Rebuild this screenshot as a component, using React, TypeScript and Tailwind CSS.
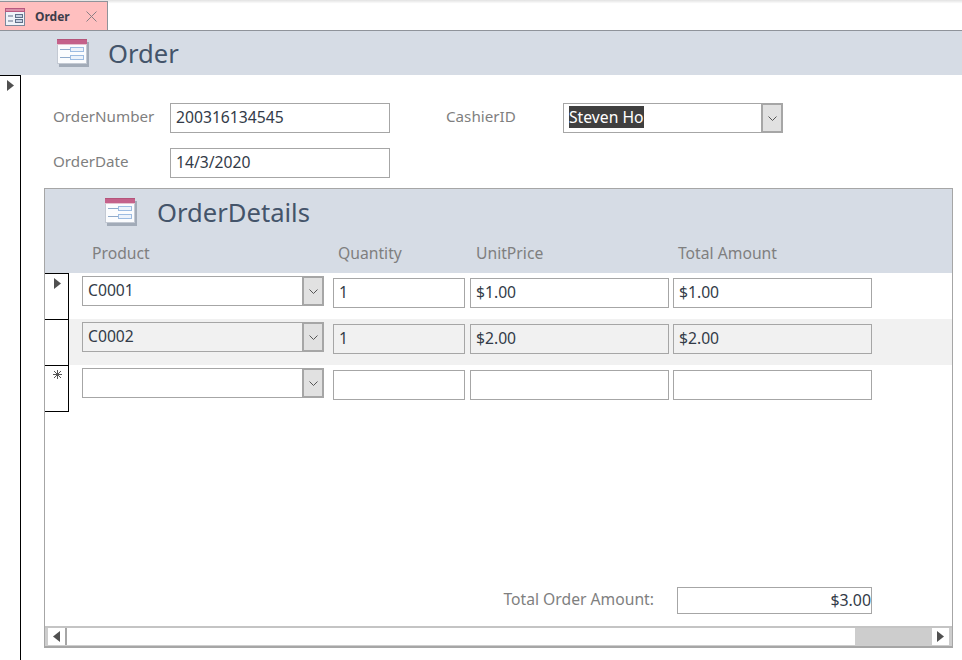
import React from "react";

const font = { fontFamily: '"Noto Sans", "Open Sans", sans-serif' };

const FormIcon = ({ className }: { className: string }) => (
  <svg viewBox="0 0 32 28" className={className}>
    <rect x="2" y="3" width="30" height="25" fill="#7f8a99" opacity="0.6" />
    <rect x="0.5" y="0.5" width="29" height="24" fill="#fbfcfe" stroke="#c3c9d3" />
    <rect x="0" y="0" width="30" height="5" fill="#c4618a" />
    <rect x="0" y="0" width="30" height="1" fill="#b5547a" />
    <rect x="0" y="5" width="30" height="1" fill="#e6c3d0" />
    <path d="M3 10.5h10M3 18.5h10" stroke="#8faacb" fill="none" />
    <rect x="13.5" y="8.5" width="13" height="4" fill="#edf3fb" stroke="#9dbce2" />
    <rect x="13.5" y="16.5" width="13" height="4" fill="#edf3fb" stroke="#9dbce2" />
  </svg>
);

const SmallFormIcon = () => (
  <svg viewBox="0 0 20 18" className="w-5 h-[18px]">
    <rect x="0.5" y="0.5" width="19" height="17" fill="#eef2f8" stroke="#7a879b" />
    <rect x="0" y="0" width="20" height="4" fill="#b8587f" />
    <rect x="1" y="1" width="18" height="2" fill="#d98ea8" />
    <path d="M3 8h5M3 13h5" stroke="#5f6f88" fill="none" />
    <rect x="10.5" y="6.5" width="7" height="3" fill="#c5d0e2" stroke="#5f6f88" />
    <rect x="10.5" y="11.5" width="7" height="3" fill="#c5d0e2" stroke="#5f6f88" />
  </svg>
);

const Triangle = ({ dir = "right" }: { dir?: "right" | "left" }) => (
  <svg viewBox="0 0 7 11" className="w-[7px] h-[11px]">
    <path d={dir === "right" ? "M0 0L7 5.5L0 11Z" : "M7 0L0 5.5L7 11Z"} fill="#505050" />
  </svg>
);

const Star = () => (
  <svg viewBox="0 0 9 9" className="w-[9px] h-[9px]">
    <path d="M4.5 0V9M0 4.5H9M1 1L8 8M8 1L1 8" stroke="#555" fill="none" />
  </svg>
);

const Chevron = () => (
  <svg viewBox="0 0 9 5" className="w-[9px] h-[5px]">
    <path d="M0.5 0.5L4.5 4.5L8.5 0.5" stroke="#555" fill="none" />
  </svg>
);

const Combo = ({ text, width, gray, children }: { text?: string; width: string; gray?: boolean; children?: React.ReactNode }) => (
  <div className={`${width} h-[30px] ${gray ? "bg-[#f1f1f1]" : "bg-white"} flex border border-[#a6a6a6] shrink-0`}>
    <div className="flex-1 pl-[5px] text-[15.7px] leading-[26px] text-[#333b48]">{children ?? text}</div>
    <div className="w-[21px] bg-[#e1e1e1] border-2 border-[#a6a6a6] border-r-[1px] border-y-[1px] flex items-center justify-center">
      <Chevron />
    </div>
  </div>
);

const Field = ({ text, width, gray }: { text?: string; width: string; gray?: boolean }) => (
  <div className={`${width} h-[30px] ${gray ? "bg-[#f1f1f1]" : "bg-white"} border border-[#a6a6a6] px-[5px] text-[15.7px] leading-[27px] text-[#333b48] shrink-0`}>
    {text}
  </div>
);

const rows = [
  { product: "C0001", qty: "1", price: "$1.00", total: "$1.00", mark: "arrow" },
  { product: "C0002", qty: "1", price: "$2.00", total: "$2.00", mark: "", gray: true },
  { product: "", qty: "", price: "", total: "", mark: "star" },
];

export default function App() {
  return (
    <div className="w-[962px] h-[660px] bg-white overflow-hidden flex flex-col" style={font}>
      {/* tab strip */}
      <div className="h-[31px] shrink-0 flex border-b border-[#8f939a] bg-gradient-to-b from-[#e2e2e2] via-white via-[12%] to-white">
        <div className="w-[108px] bg-[#ffbfbf] border-r border-t border-[#8f939a] mt-[1px] flex items-center pl-[5px] pt-[1px]">
          <SmallFormIcon />
          <span className="ml-[10px] text-[12px] font-bold text-[#3d3d4a]">Order</span>
          <svg viewBox="0 0 11 11" className="w-[11px] h-[11px] ml-[16px]">
            <path d="M0.5 0.5L10.5 10.5M10.5 0.5L0.5 10.5" stroke="#8a7f84" fill="none" />
          </svg>
        </div>
      </div>

      {/* form header */}
      <div className="h-[44px] shrink-0 bg-[#d6dce5] flex items-center pl-[57px]">
        <FormIcon className="w-[32px] h-[28px]" />
        <span className="ml-[19px] pt-[2px] text-[25.6px] leading-none text-[#44546a]">Order</span>
      </div>

      <div className="flex-1 flex min-h-0">
        {/* record selector */}
        <div className="w-[21px] shrink-0 border-r border-t border-black pl-[7px] pt-[4px]">
          <Triangle />
        </div>

        <div className="flex-1 min-w-0">
          <div className="flex items-center h-[30px] mt-[28px] ml-[32px]">
            <span className="w-[117px] pb-[4px] text-[15.2px] text-[#7f7f7f]">OrderNumber</span>
            <Field text="200316134545" width="w-[220px]" />
            <span className="ml-[56px] w-[117px] pb-[4px] text-[15.2px] text-[#7f7f7f]">CashierID</span>
            <Combo width="w-[220px]">
              <span className="bg-[#3f3f3f] text-white inline-block leading-[22px]">Steven Ho</span>
            </Combo>
          </div>
          <div className="flex items-center h-[30px] mt-[15px] ml-[32px]">
            <span className="w-[117px] pb-[4px] text-[15.2px] text-[#7f7f7f]">OrderDate</span>
            <Field text="14/3/2020" width="w-[220px]" />
          </div>

          {/* subform */}
          <div className="mt-[10px] ml-[23px] w-[909px] h-[460px] border border-[#a6a6a6] border-b-2 flex flex-col">
            <div className="h-[84px] shrink-0 bg-[#d6dce5]">
              <div className="flex items-center h-[46px] pl-[60px]">
                <FormIcon className="w-[32px] h-[28px]" />
                <span className="ml-[20px] pt-[2px] text-[25.6px] leading-none text-[#44546a]">OrderDetails</span>
              </div>
              <div className="flex text-[15.7px] text-[#7f7f7f] leading-[36px]">
                <span className="ml-[47px] w-[246px]">Product</span>
                <span className="w-[138px]">Quantity</span>
                <span className="w-[202px]">UnitPrice</span>
                <span>Total Amount</span>
              </div>
            </div>

            {rows.map((r) => (
              <div key={r.product || "new"} className={`h-[46px] shrink-0 flex ${r.gray ? "bg-[#f1f1f1]" : ""}`}>
                <div className={`w-[24px] shrink-0 bg-white border-r border-t border-black ${r.mark === "star" ? "border-b h-[47px]" : ""} flex justify-center pl-[1px] pt-[4px]`}>
                  {r.mark === "arrow" && <Triangle />}
                  {r.mark === "star" && <Star />}
                </div>
                <div className="ml-[13px] mt-[3px]">
                  <Combo text={r.product} width="w-[242px]" gray={r.gray} />
                </div>
                <div className="flex mt-[5px] ml-[9px] gap-[5px]">
                  <Field text={r.qty} width="w-[132px]" gray={r.gray} />
                  <Field text={r.price} width="w-[199px]" gray={r.gray} />
                </div>
                <div className="mt-[5px] ml-[4px]">
                  <Field text={r.total} width="w-[199px]" gray={r.gray} />
                </div>
              </div>
            ))}

            <div className="flex-1" />

            {/* total */}
            <div className="flex items-center justify-end h-[27px] pr-[80px] mb-[12px]">
              <span className="mr-[23px] pb-[1px] text-[15.7px] text-[#7f7f7f]">Total Order Amount:</span>
              <div className="w-[195px] h-[27px] border border-[#a6a6a6] text-right text-[15.9px] leading-[25px] text-[#333b48]">$3.00</div>
            </div>

            {/* scrollbar */}
            <div className="h-[20px] shrink-0 bg-[#cdcdcd] flex border-t-2 border-[#c4c4c4] pt-0 pb-[1px] px-[3px]">
              <div className="w-[17px] bg-white flex items-center justify-center"><Triangle dir="left" /></div>
              <div className="w-[2px] bg-[#a6a6a6]" />
              <div className="w-[788px] bg-white" />
              <div className="flex-1" />
              <div className="w-[17px] bg-white flex items-center justify-center"><Triangle /></div>
            </div>
          </div>
        </div>
      </div>
    </div>
  );
}
